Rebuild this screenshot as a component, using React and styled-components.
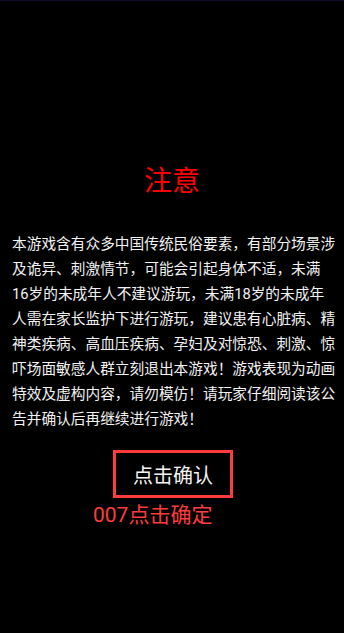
import React from 'react'
import styled, { createGlobalStyle } from 'styled-components'

const GlobalStyle = createGlobalStyle`
  html, body {
    margin: 0;
    padding: 0;
    background: #000;
  }
  body {
    font-family: Roboto, "Noto Sans CJK SC", sans-serif;
  }
`

const Screen = styled.div`
  width: 344px;
  height: 633px;
  background: #000;
  border-top: 1px solid #0d0d30;
  box-sizing: border-box;
  padding-top: 164px;
  display: flex;
  flex-direction: column;
`

const Title = styled.h1`
  margin: 0;
  text-align: center;
  color: #ff0000;
  font-size: 28px;
  font-weight: 400;
  line-height: 34px;
`

const Notice = styled.p`
  margin: 33px 0 0;
  padding: 0 0 0 12px;
  color: #f2f2f2;
  font-size: 14.7px;
  line-height: 25px;
`

const Line = styled.span`
  display: block;
  white-space: nowrap;
`

const Actions = styled.div`
  display: flex;
  flex-direction: column;
  margin-top: 18px;
`

const ConfirmButton = styled.button`
  align-self: center;
  margin-left: 2px;
  width: 120px;
  height: 48px;
  background: transparent;
  border: 3px solid #ff3b3b;
  color: #f4f4f4;
  font-family: Roboto, "Noto Sans CJK SC", sans-serif;
  font-size: 20px;
  padding: 0;
  cursor: pointer;
`

const Hint = styled.span`
  margin-top: 5px;
  padding-left: 93px;
  color: #ff3b3b;
  font-size: 21px;
  line-height: 25px;
`

const lines = [
  '本游戏含有众多中国传统民俗要素，有部分场景涉',
  '及诡异、刺激情节，可能会引起身体不适，未满',
  '16岁的未成年人不建议游玩，未满18岁的未成年',
  '人需在家长监护下进行游玩，建议患有心脏病、精',
  '神类疾病、高血压疾病、孕妇及对惊恐、刺激、惊',
  '吓场面敏感人群立刻退出本游戏！游戏表现为动画',
  '特效及虚构内容，请勿模仿！请玩家仔细阅读该公',
  '告并确认后再继续进行游戏！',
]

const App = () => {
  return (
    <>
      <GlobalStyle />
      <Screen>
        <Title>注意</Title>
        <Notice>
          {lines.map((text) => (
            <Line key={text}>{text}</Line>
          ))}
        </Notice>
        <Actions>
          <ConfirmButton>点击确认</ConfirmButton>
          <Hint>007点击确定</Hint>
        </Actions>
      </Screen>
    </>
  )
}

export default App
